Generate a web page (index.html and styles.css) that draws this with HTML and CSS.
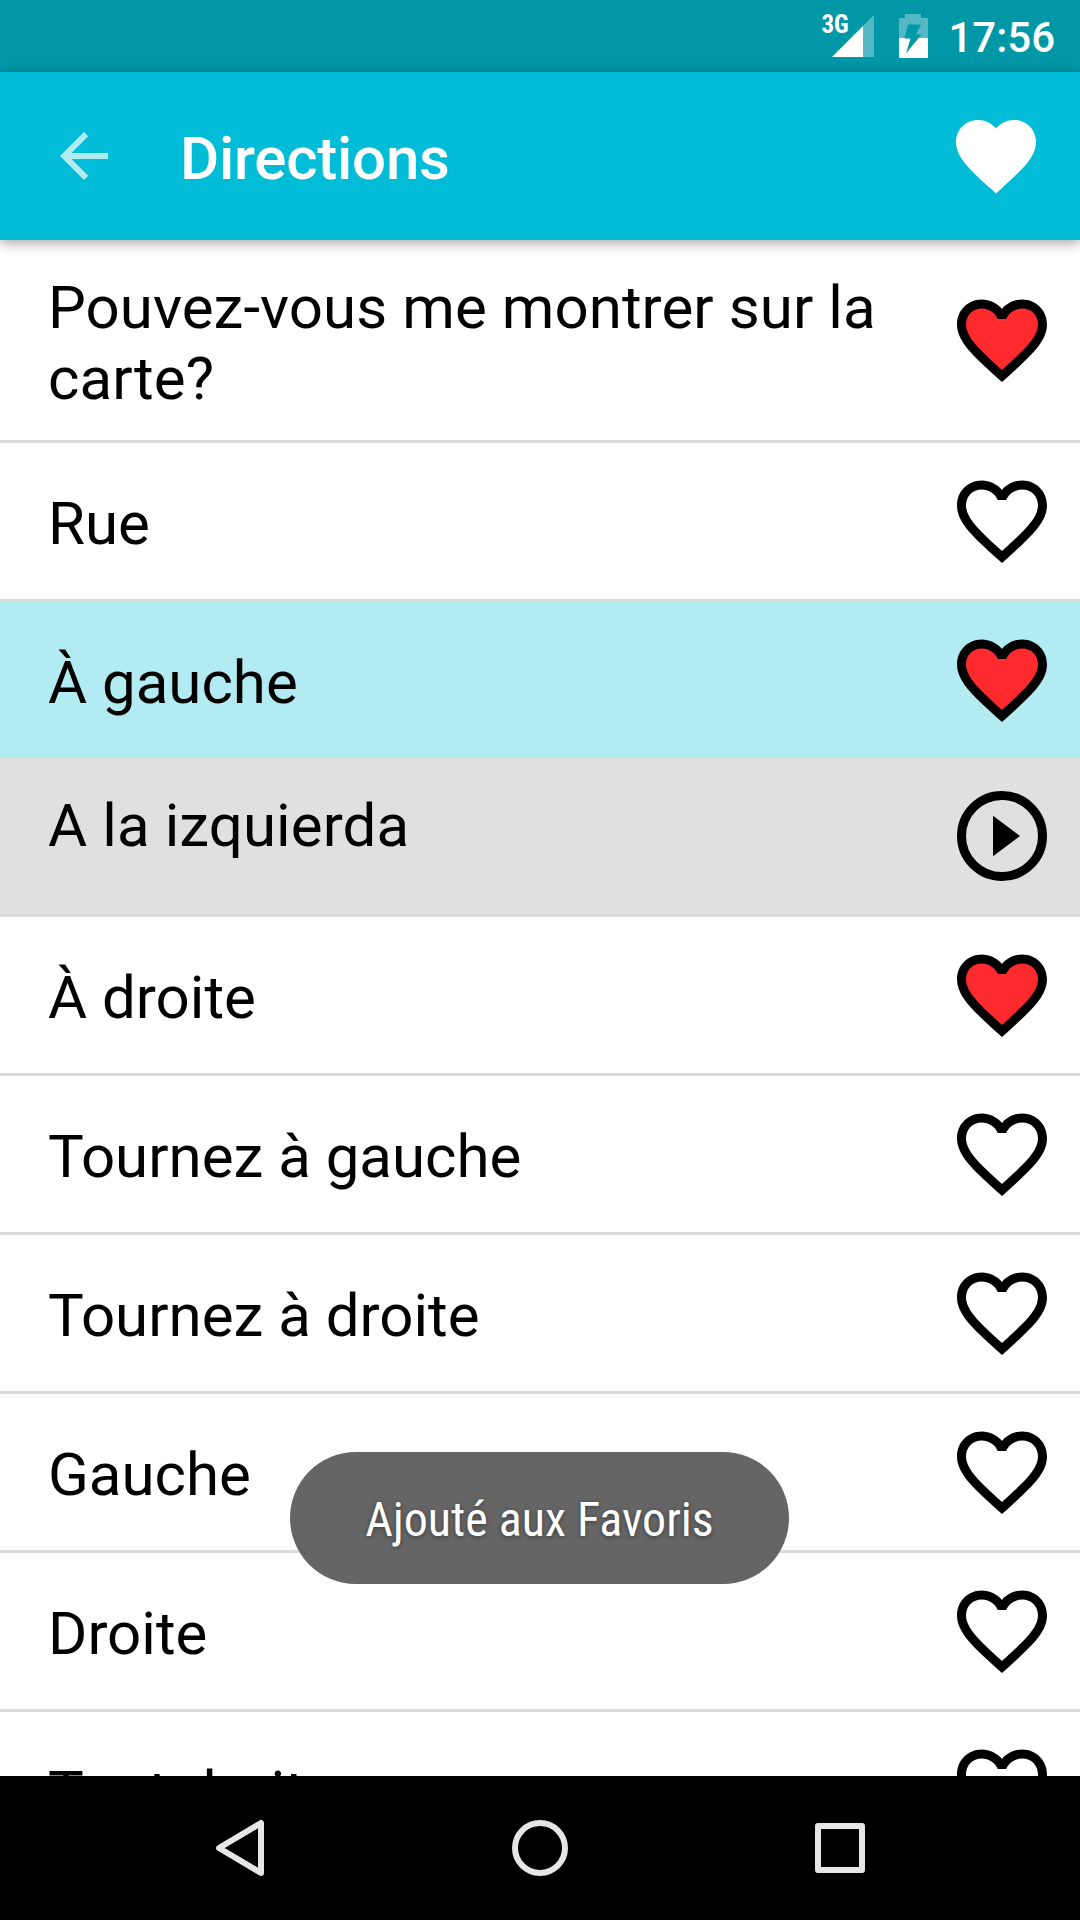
FILE: index.html
```
<!DOCTYPE html>
<html lang="fr">
<head>
<meta charset="utf-8">
<title>Directions</title>
<link rel="stylesheet" href="styles.css">
</head>
<body>
<svg class="defs" width="0" height="0">
  <symbol id="heart" viewBox="0 0 24 24"><path d="M16.5 3c-1.74 0-3.41.81-4.5 2.09C10.91 3.81 9.24 3 7.5 3 4.42 3 2 5.42 2 8.5c0 3.78 3.4 6.86 8.55 11.54L12 21.35l1.45-1.32C18.6 15.36 22 12.28 22 8.5 22 5.42 19.58 3 16.5 3zm-4.4 15.55l-.1.1-.1-.1C7.14 14.24 4 11.39 4 8.5 4 6.5 5.5 5 7.5 5c1.54 0 3.04.99 3.57 2.36h1.87C13.46 5.99 14.96 5 16.5 5c2 0 3.5 1.5 3.5 3.5 0 2.89-3.14 5.74-7.9 10.05z"/></symbol>
  <symbol id="heart-full" viewBox="0 0 24 24"><path d="M12 21.35l-1.45-1.32C5.4 15.36 2 12.28 2 8.5 2 5.42 4.42 3 7.5 3c1.74 0 3.41.81 4.5 2.09C13.09 3.81 14.76 3 16.5 3 19.58 3 22 5.42 22 8.5c0 3.78-3.4 6.86-8.55 11.54L12 21.35z"/></symbol>
  <symbol id="heart-red" viewBox="0 0 24 24"><path fill="#ff2a2e" d="M12 19.6C6.5 14.8 3 12 3 8.5 3 6 5 4 7.5 4 9.3 4 11 5 12 6.5 13 5 14.700 4 16.500 4 19 4 21 6 21 8.500c0 3.500-3.500 6.300-9 11.100z"/><use href="#heart"/></symbol>
</svg>
<div class="screen">
  <header class="status">
    <span class="network">3G</span>
    <svg class="signal" width="42" height="42" viewBox="0 0 42 42"><path fill="#fff" fill-opacity=".33" d="M31 11 42 0v42H31z"/><path fill="#fff" d="M0 42 31 11v31z"/></svg>
    <svg class="battery" width="29" height="44" viewBox="0 0 29 44"><path fill="#fff" fill-opacity=".33" d="M6 0h16v4h7v20H0V4h6z"/><path fill="#fff" d="M0 24h29v20H0z"/><path fill="#0097a7" d="M9 10.500h13L17 20.500h5.500L7 39.500 11.500 24.500H5.500z"/></svg>
    <span class="clock">17:56</span>
  </header>
  <div class="appbar">
    <svg class="back" width="72" height="72" viewBox="0 0 24 24"><path fill="#fff" fill-opacity=".7" d="M20 11H7.830l5.590-5.590L12 4l-8 8 8 8 1.410-1.410L7.830 13H20v-2z"/></svg>
    <h1 class="title">Directions</h1>
    <svg class="fav" width="96" height="96"><use href="#heart-full"/></svg>
  </div>
  <main class="list">
    <div class="row first"><span class="phrase">Pouvez-vous me montrer sur la carte?</span><svg class="icon"><use href="#heart-red"/></svg></div>
    <div class="row"><span class="phrase">Rue</span><svg class="icon"><use href="#heart"/></svg></div>
    <div class="row selected"><span class="phrase">À gauche</span><svg class="icon"><use href="#heart-red"/></svg></div>
    <div class="row translation"><span class="phrase">A la izquierda</span><svg class="icon" viewBox="0 0 24 24"><circle cx="12" cy="12" r="9" fill="none" stroke="#000" stroke-width="2"/><path d="M10 7.500v9l6-4.500z"/></svg></div>
    <div class="row"><span class="phrase">À droite</span><svg class="icon"><use href="#heart-red"/></svg></div>
    <div class="row"><span class="phrase">Tournez à gauche</span><svg class="icon"><use href="#heart"/></svg></div>
    <div class="row"><span class="phrase">Tournez à droite</span><svg class="icon"><use href="#heart"/></svg></div>
    <div class="row"><span class="phrase">Gauche</span><svg class="icon"><use href="#heart"/></svg></div>
    <div class="row"><span class="phrase">Droite</span><svg class="icon"><use href="#heart"/></svg></div>
    <div class="row"><span class="phrase">Tout droit</span><svg class="icon"><use href="#heart"/></svg></div>
  </main>
  <nav class="navbar">
    <svg width="60" height="60" viewBox="0 0 60 60"><path d="M51 5v50L9 30z"/></svg>
    <svg width="60" height="60" viewBox="0 0 60 60"><circle cx="30" cy="30" r="25"/></svg>
    <svg width="60" height="60" viewBox="0 0 60 60"><path d="M8 8h44v44H8z"/></svg>
  </nav>
  <div class="toast"><span class="message">Ajouté aux Favoris</span></div>
</div>
</body>
</html>
```
FILE: styles.css
```
* { box-sizing: border-box; }
body { margin: 0; font-family: Roboto, "Liberation Sans", sans-serif; }
.defs { display: block; position: absolute; }
.screen {
  position: relative;
  width: 1080px;
  height: 1920px;
  display: flex;
  flex-direction: column;
  overflow: hidden;
  background: #fff;
}
.status {
  height: 72px;
  flex: none;
  display: flex;
  justify-content: flex-end;
  align-items: flex-start;
  padding-right: 25px;
  background: #0097a7;
  color: #fff;
}
.network {
  font: 700 25px/30px "Roboto Condensed", Roboto, sans-serif;
  font-stretch: 75%;
  width: 27px;
  margin: 10px -16px 0 0;
}
.signal { margin-top: 15px; }
.battery { margin: 14px 20px 0 25px; }
.clock { font-weight: 500; font-size: 42px; line-height: 50px; margin-top: 13px; }
.appbar {
  position: relative;
  z-index: 1;
  height: 168px;
  flex: none;
  display: flex;
  align-items: center;
  padding: 0 36px 0 48px;
  background: #00bcd6;
  color: #fff;
  box-shadow: 0 3px 12px rgba(0, 0, 0, .36);
}
.title { margin: 6px 0 0 60px; font-size: 60px; line-height: 70px; font-weight: 500; letter-spacing: -.25px; }
.fav { margin-left: auto; fill: #fff; }
.list { flex: 1; min-height: 0; overflow: hidden; }
.row {
  height: 159px;
  display: flex;
  align-items: center;
  justify-content: space-between;
  padding: 0 24px 0 48px;
  border-bottom: 3px solid #dadada;
}
.first { height: 203px; }
.selected { height: 156px; border-bottom: 0; background: #b2ebf2; }
.translation { background: #e0e0e0; }
.phrase { width: 850px; padding-top: 4px; font-size: 60px; line-height: 71px; color: #000; }
.first .phrase { padding-top: 5px; letter-spacing: .07px; }
.translation .phrase { padding: 0 0 22px; letter-spacing: .1px; }
.icon { width: 108px; height: 108px; flex: none; }
.navbar {
  height: 144px;
  flex: none;
  display: flex;
  justify-content: center;
  align-items: center;
  gap: 240px;
  background: #000;
}
.navbar svg { fill: none; stroke: #e6e6e6; stroke-width: 6; stroke-linejoin: round; }
.toast {
  position: absolute;
  z-index: 2;
  left: 290px;
  top: 1452px;
  width: 499px;
  height: 132px;
  border-radius: 66px;
  background: rgba(98, 98, 98, .98);
  display: flex;
  align-items: center;
  justify-content: center;
}
.message {
  font: 400 48px/56px "Roboto Condensed", Roboto, sans-serif;
  font-stretch: 75%;
  white-space: nowrap;
  color: #fff;
  padding-top: 4px;
  text-shadow: 0 1px 4px rgba(0, 0, 0, .45);
}
```
